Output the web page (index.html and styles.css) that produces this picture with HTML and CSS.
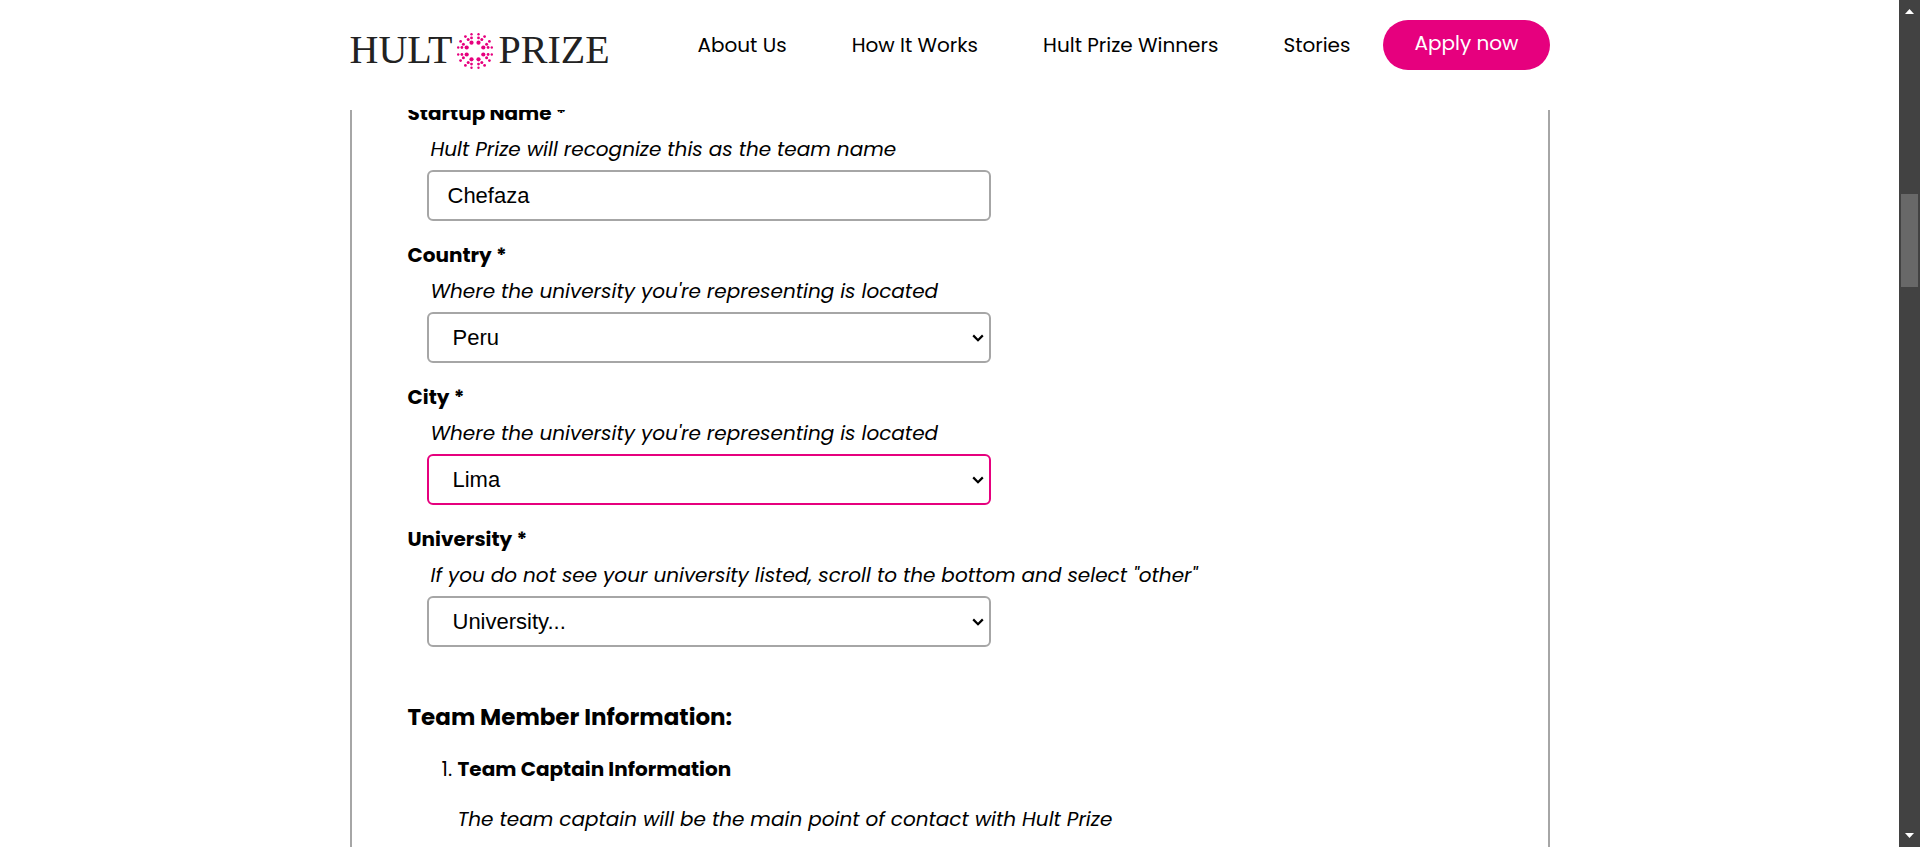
FILE: index.html
```html
<!DOCTYPE html>
<html lang="en">
<head>
<meta charset="utf-8">
<title>Hult Prize Application</title>
<link rel="stylesheet" href="styles.css">
</head>
<body class="window">
  <div class="page">
    <header class="header">
      <div class="wrap header-row">
        <a class="logo" href="#" aria-label="Hult Prize">
          <span>HULT</span>
          <svg class="burst" viewBox="-19 -19 38 38" aria-hidden="true">
            <defs>
              <g id="ray">
                <circle cx="3.5" cy="-8.3" r="2.1"/>
                <circle cx="3.5" cy="-13.1" r="1.4"/>
                <circle cx="3.5" cy="-16.8" r="1.2"/>
                <circle cx="6.8" cy="-11.6" r="1.5"/>
                <circle cx="9.6" cy="-14.4" r="1.4"/>
              </g>
              <g id="pair"><use href="#ray"/><use href="#ray" transform="scale(-1 1)"/></g>
            </defs>
            <use href="#pair"/>
            <use href="#pair" transform="rotate(90)"/>
            <use href="#pair" transform="rotate(180)"/>
            <use href="#pair" transform="rotate(270)"/>
          </svg>
          <span>PRIZE</span>
        </a>
        <nav class="nav">
          <a href="#">About Us</a>
          <a href="#">How It Works</a>
          <a href="#">Hult Prize Winners</a>
          <a href="#">Stories</a>
          <a class="apply" href="#">Apply now</a>
        </nav>
      </div>
    </header>
    <main class="content">
      <form class="wrap form">
        <div class="field">
          <label for="startup">Startup Name *</label>
          <p class="hint">Hult Prize will recognize this as the team name</p>
          <input class="control" id="startup" type="text" value="Chefaza">
        </div>
        <div class="field">
          <label for="country">Country *</label>
          <p class="hint">Where the university you're representing is located</p>
          <select class="control" id="country"><option>Peru</option></select>
        </div>
        <div class="field">
          <label for="city">City *</label>
          <p class="hint">Where the university you're representing is located</p>
          <select class="control active" id="city"><option>Lima</option></select>
        </div>
        <div class="field">
          <label for="university">University *</label>
          <p class="hint">If you do not see your university listed, scroll to the bottom and select "other"</p>
          <select class="control" id="university"><option>University...</option></select>
        </div>
        <h2 class="section-title">Team Member Information:</h2>
        <ol class="members">
          <li><b>Team Captain Information</b>
            <p class="note">The team captain will be the main point of contact with Hult Prize</p>
          </li>
        </ol>
      </form>
    </main>
  </div>
  <div class="scrollbar" aria-hidden="true">
    <svg class="arrow" viewBox="0 0 9 5"><path d="M4.5 0 9 5H0z"/></svg>
    <div class="track"><div class="thumb"></div></div>
    <svg class="arrow" viewBox="0 0 9 5"><path d="M0 0h9L4.5 5z"/></svg>
  </div>
</body>
</html>
```
FILE: styles.css
```css
* { box-sizing: border-box; }

.window {
  margin: 0;
  height: 100vh;
  display: flex;
  overflow: hidden;
  background: #fff;
  color: #000;
  font: 20px/30px Poppins, Inter, sans-serif;
}

.page {
  flex: 1;
  min-width: 0;
  display: flex;
  flex-direction: column;
}

.wrap {
  width: 100%;
  max-width: 1200px;
  margin: 0 auto;
}

.header {
  flex: none;
  height: 110px;
  padding-top: 20px;
}

.header-row {
  display: flex;
  align-items: center;
  justify-content: space-between;
}

.logo {
  display: flex;
  align-items: center;
  gap: 4px;
  padding-top: 12px;
  color: #222;
  font: 40px/36px "Liberation Serif", serif;
  text-decoration: none;
}

.logo span { padding-bottom: 2px; }

.burst {
  width: 38px;
  height: 38px;
  fill: #e6007e;
}

.nav {
  display: flex;
  align-items: center;
  gap: 65px;
}

.nav a {
  color: #000;
  text-decoration: none;
  white-space: nowrap;
}

.nav .apply {
  margin-left: -32px;
  padding: 8px 31px 12px;
  border-radius: 25px;
  background: #e6007e;
  color: #fff;
}

.content {
  flex: 1;
  min-height: 0;
  overflow: hidden;
}

.form {
  min-height: 100%;
  padding: 0 56px 60px;
  border: solid #a6a6a6;
  border-width: 0 2px;
}

.field {
  display: flex;
  flex-direction: column;
  gap: 6px;
  margin-bottom: 19px;
}

.field:first-child { margin-top: -12px; }

.field label,
.members b {
  font-weight: 700;
}

.hint {
  margin: 0 0 0 23px;
  font-style: italic;
}

.control {
  width: 564px;
  max-width: 100%;
  height: 51px;
  margin-left: 19px;
  padding: 0 19px;
  border: 2px solid #a6a6a6;
  border-radius: 6px;
  background: #fff;
  color: #000;
  font: 22px "Liberation Sans", Arial, sans-serif;
}

select.control {
  appearance: none;
  padding: 0 24px;
  background: #fff url("data:image/svg+xml,%3Csvg xmlns='http://www.w3.org/2000/svg' width='12' height='8'%3E%3Cpath d='M1.2 1.4 6 6.2 10.8 1.4' fill='none' stroke='%23000' stroke-width='2.2'/%3E%3C/svg%3E") no-repeat right 5px center;
}

.control.active { border-color: #e6007e; }

.section-title {
  margin: 52px 0 19px;
  font-size: 23px;
  line-height: 36px;
}

.members {
  margin: 0;
  padding-left: 50px;
}

.note {
  margin: 20px 0;
  font-style: italic;
}

.scrollbar {
  flex: none;
  width: 21px;
  padding: 9px 2px;
  display: flex;
  flex-direction: column;
  align-items: center;
  background: #424242;
}

.arrow {
  width: 9px;
  height: 5px;
  fill: #fff;
}

.track {
  flex: 1;
  width: 17px;
  padding-top: 180px;
}

.thumb {
  height: 93px;
  background: #686868;
}
```
